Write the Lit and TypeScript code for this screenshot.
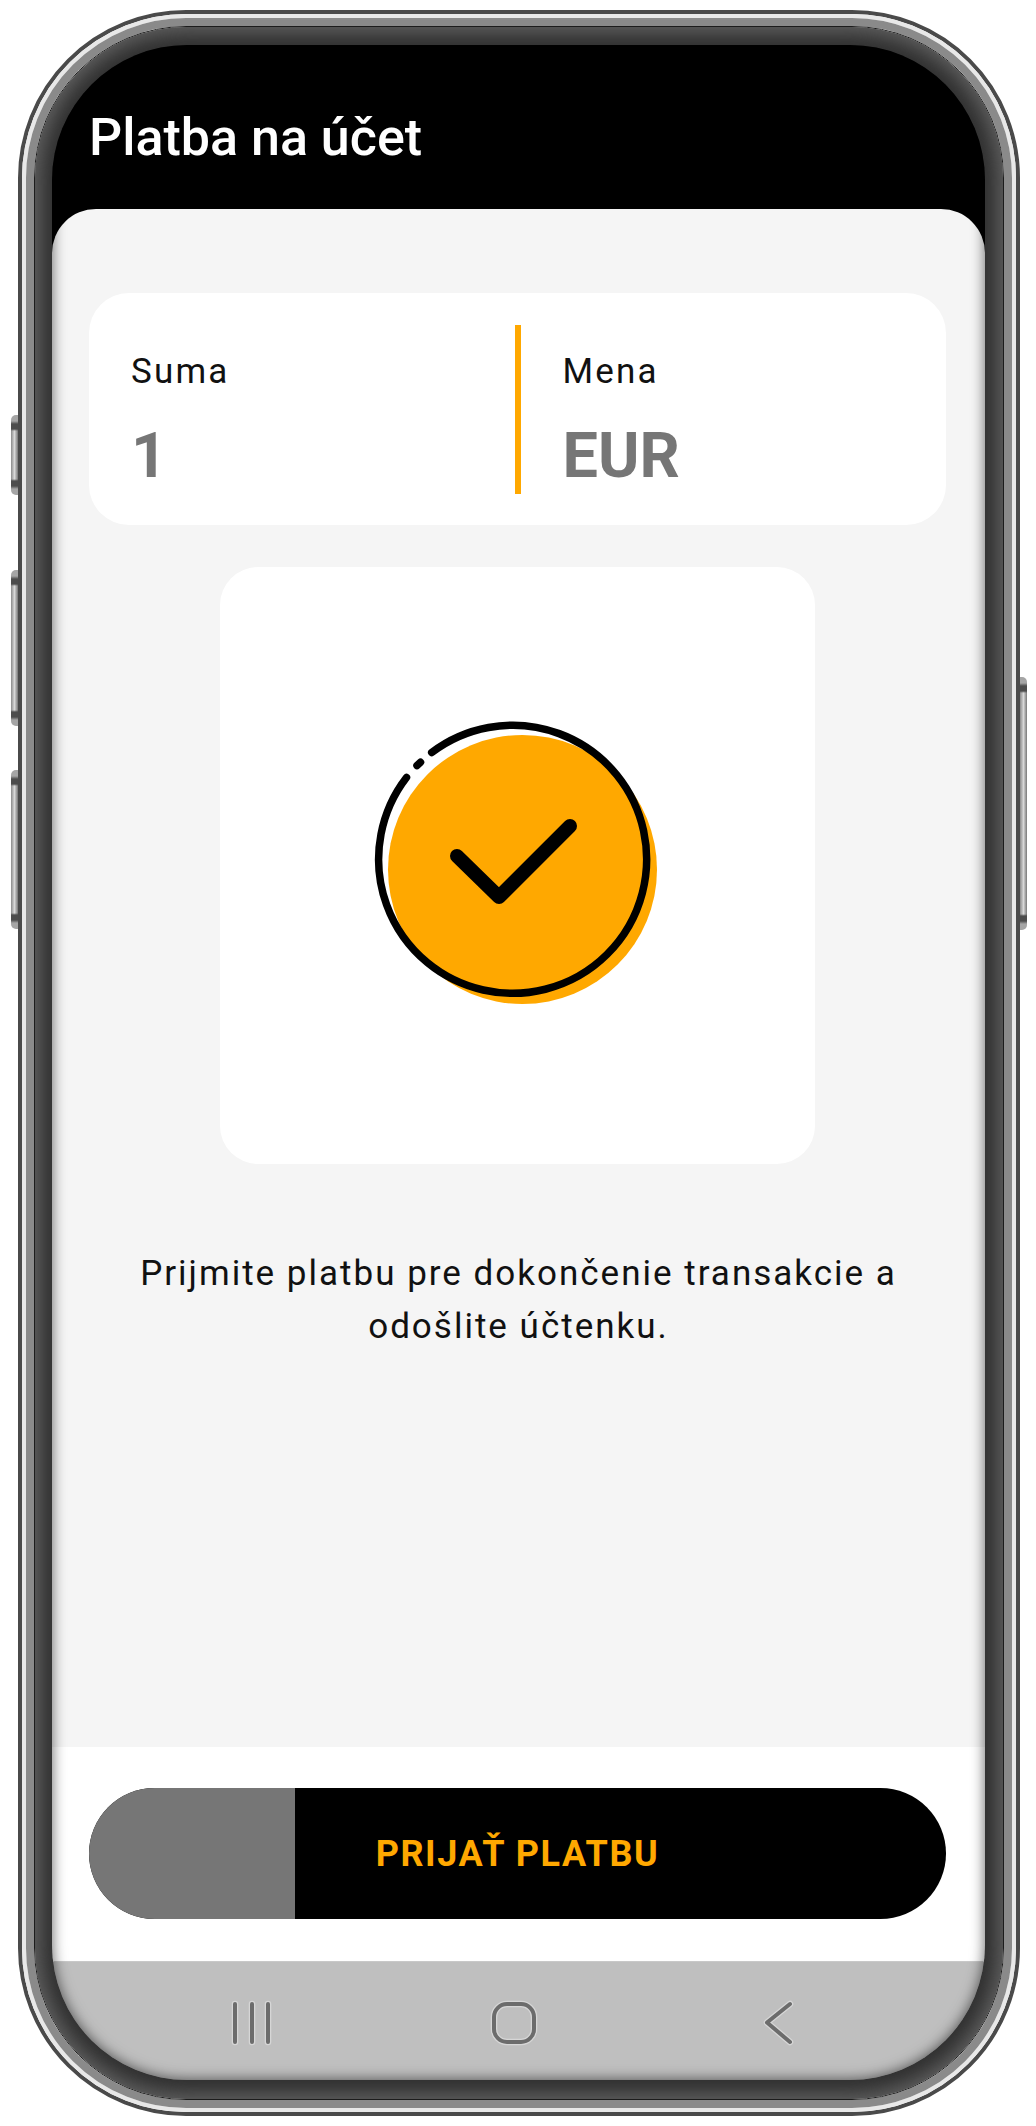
import { LitElement, html, css } from "lit";
import { customElement } from "lit/decorators.js";

@customElement("app-root")
export class AppRoot extends LitElement {
  static styles = css`
    :host {
      display: block;
      width: 1036px;
      height: 2126px;
      background: #fff;
      font-family: Roboto, "Liberation Sans", sans-serif;
      overflow: hidden;
    }
    .page { padding: 10px 16px 10px 18px; position: relative; height: 2126px; box-sizing: border-box; }
    .f1, .f2, .f3, .f4, .bezel, .screen { box-sizing: border-box; }
    .f1 { height: 2106px; border: 4px solid #4a4a4a; border-radius: 168px; }
    .f2 { height: 100%; border: 4px solid #e8e8e8; border-radius: 164px; }
    .f3 { height: 100%; border: 8px solid #8a8a8a; border-radius: 160px; }
    .f4 { height: 100%; border: 1px solid #1c1c1c; border-radius: 152px; }
    .bezel {
      height: 100%;
      padding: 18px 18px 19px 17px;
      border-radius: 151px;
      background: #303030;
      box-shadow: inset 0 0 18px 6px #606060;
    }
    .screen {
      position: relative;
      height: 100%;
      border-radius: 135px;
      overflow: hidden;
      background: #000;
      display: flex;
      flex-direction: column;
    }
    .screen::after {
      content: "";
      position: absolute;
      inset: 0;
      border-radius: 135px;
      box-shadow: inset 0 0 14px rgba(0, 0, 0, 0.62);
      pointer-events: none;
    }
    .side {
      position: absolute;
      width: 7px;
      border-radius: 5px 0 0 5px;
      background:
        linear-gradient(to bottom, #a5a5a5 0 6px, #4c4c4c 9px 14px, transparent 16px calc(100% - 16px), #4c4c4c calc(100% - 14px) calc(100% - 9px), #a5a5a5 calc(100% - 6px)),
        linear-gradient(to right, #8a8a8a, #d8d8d8 50%, #777);
    }
    .s1 { left: 11px; top: 415px; height: 80px; }
    .s2 { left: 11px; top: 570px; height: 156px; }
    .s3 { left: 11px; top: 770px; height: 159px; }
    .s4 { left: 1020px; top: 677px; height: 253px; border-radius: 0 5px 5px 0; }

    .header {
      height: 164px;
      flex: none;
      box-sizing: border-box;
      padding: 61px 0 0 37px;
      color: #fff;
      font-size: 52px;
      font-weight: 500;
      line-height: 64px;
    }
    .panel {
      height: 1538px;
      flex: none;
      box-sizing: border-box;
      background: #f5f5f5;
      border-radius: 44px 44px 0 0;
      padding: 84px 39px 0 37px;
      display: flex;
      flex-direction: column;
      align-items: center;
    }
    .card {
      width: 857px;
      height: 232px;
      flex: none;
      background: #fff;
      border-radius: 40px;
      display: flex;
      align-items: center;
    }
    .col { flex: 1; padding-left: 42px; box-sizing: border-box; height: 169px; }
    .divider { width: 6px; height: 169px; background: #ffa800; flex: none; }
    .label { font-size: 35px; line-height: 40px; letter-spacing: 2.2px; color: #111; margin-top: 27px; }
    .value { font-size: 63px; font-weight: 700; line-height: 72px; color: #767676; margin-top: 28px; }
    .check {
      width: 595px;
      height: 597px;
      flex: none;
      margin-top: 42px;
      background: #fff;
      border-radius: 38px;
      display: flex;
      align-items: center;
      justify-content: center;
    }
    .msg {
      margin-top: 83px;
      width: 800px;
      padding-left: 2px;
      box-sizing: border-box;
      text-align: center;
      font-size: 35px;
      line-height: 53px;
      letter-spacing: 2px;
      color: #111;
    }
    .footer {
      height: 214px;
      flex: none;
      box-sizing: border-box;
      background: #fff;
      padding: 41px 0 0 37px;
    }
    .btn {
      position: relative;
      width: 857px;
      height: 131px;
      border-radius: 66px;
      background: #000;
      overflow: hidden;
      display: flex;
      align-items: center;
      justify-content: center;
      color: #ffa800;
      font-size: 36px;
      font-weight: 700;
      letter-spacing: 1.6px;
    }
    .thumb {
      position: absolute;
      left: 0;
      top: 0;
      bottom: 0;
      width: 206px;
      background: #767676;
    }
    .btn span { position: relative; }
    .nav {
      flex: 1;
      background: #bfbfbf;
      border-top: 1px solid #c8c8c8;
    }
    svg { display: block; flex: none; }
  `;

  render() {
    return html`
      <div class="page">
        <div class="side s1"></div>
        <div class="side s2"></div>
        <div class="side s3"></div>
        <div class="side s4"></div>
        <div class="f1"><div class="f2"><div class="f3"><div class="f4">
          <div class="bezel">
            <div class="screen">
              <div class="header">Platba na účet</div>
              <div class="panel">
                <div class="card">
                  <div class="col">
                    <div class="label">Suma</div>
                    <div class="value">1</div>
                  </div>
                  <div class="divider"></div>
                  <div class="col">
                    <div class="label">Mena</div>
                    <div class="value">EUR</div>
                  </div>
                </div>
                <div class="check">
                  <svg width="295" height="295" viewBox="370 718 295 295">
                    <circle cx="522.5" cy="869.5" r="134.5" fill="#ffa800"></circle>
                    <g fill="none" stroke="#000" stroke-linecap="round" stroke-linejoin="round">
                      <path stroke-width="7.5" d="M431.7 752.5 A134 134 0 1 1 406.5 777.5"></path>
                      <path stroke-width="7.5" d="M417 765.6 L420.5 762.3"></path>
                      <path stroke-width="14" d="M457 856 L499 897 L570 826"></path>
                    </g>
                  </svg>
                </div>
                <div class="msg">Prijmite platbu pre dokončenie transakcie a odošlite účtenku.</div>
              </div>
              <div class="footer">
                <div class="btn"><div class="thumb"></div><span>PRIJAŤ PLATBU</span></div>
              </div>
              <div class="nav">
                <svg width="933" height="118" viewBox="52 1962 933 118">
                  <g fill="none" stroke-linecap="round" stroke-linejoin="round">
                    <g stroke="#d6d6d6" stroke-width="6.5">
                      <path d="M235 2004V2042M252 2004V2042M268 2004V2042"></path>
                      <rect x="494" y="2004" width="40" height="38" rx="13"></rect>
                      <path d="M790 2004L767 2022.5L790 2042"></path>
                    </g>
                    <g stroke="#6c6c6c" stroke-width="4">
                      <path d="M235 2004V2042M252 2004V2042M268 2004V2042"></path>
                      <rect x="494" y="2004" width="40" height="38" rx="13"></rect>
                      <path d="M790 2004L767 2022.5L790 2042"></path>
                    </g>
                  </g>
                </svg>
              </div>
            </div>
          </div>
        </div></div></div></div>
      </div>
    `;
  }
}
